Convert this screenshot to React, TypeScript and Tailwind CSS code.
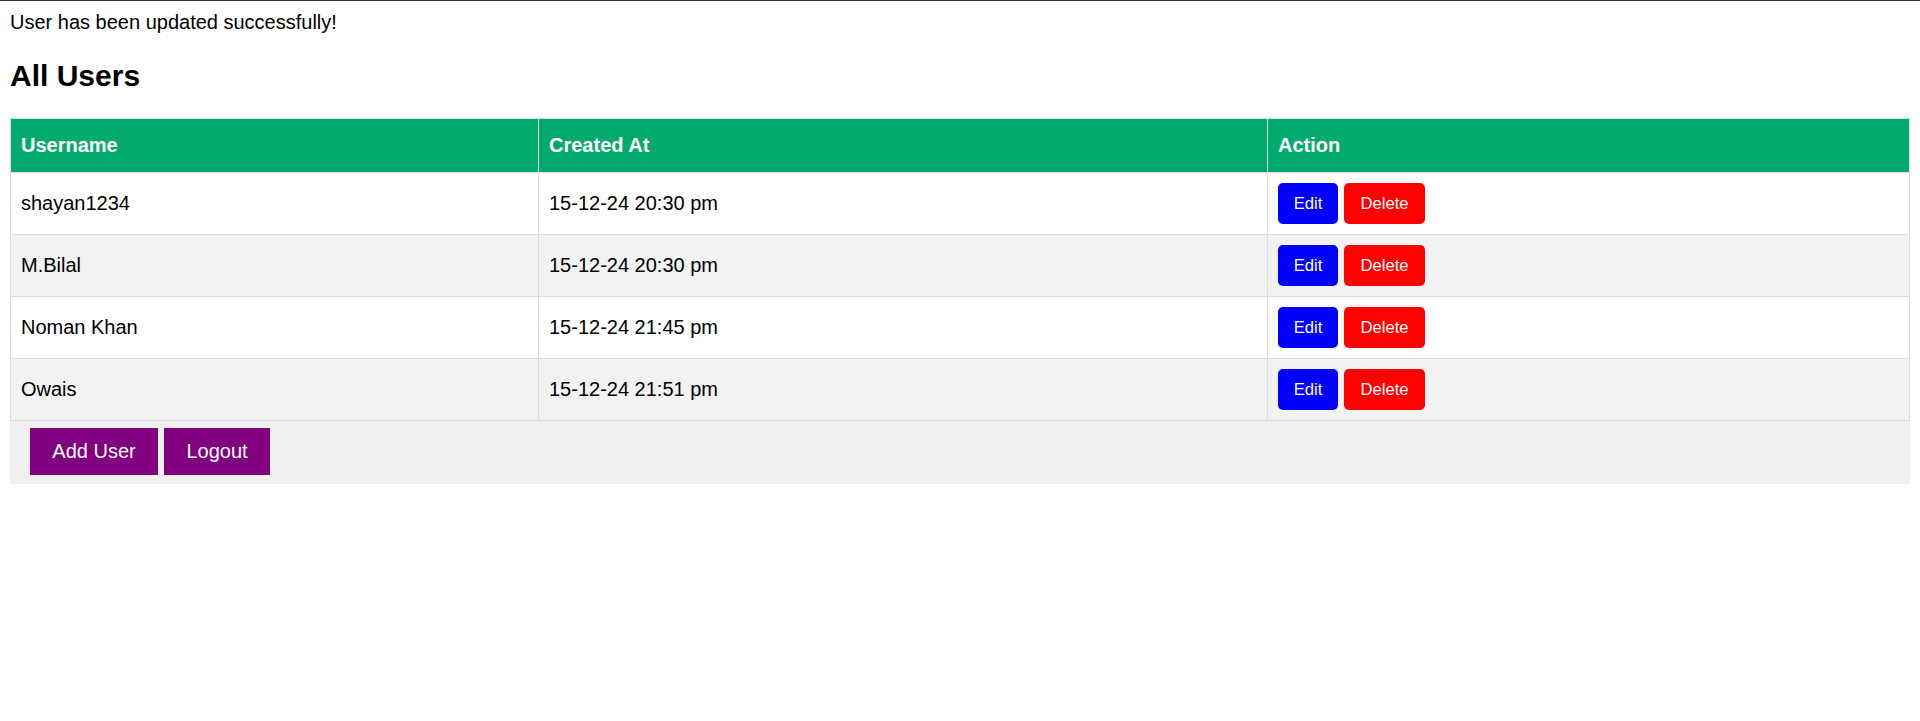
const users = [
  { name: "shayan1234", createdAt: "15-12-24 20:30 pm" },
  { name: "M.Bilal", createdAt: "15-12-24 20:30 pm" },
  { name: "Noman Khan", createdAt: "15-12-24 21:45 pm" },
  { name: "Owais", createdAt: "15-12-24 21:51 pm" },
];

export default function App() {
  return (
    <div className="min-h-[721px] border-t border-[#2b3b2b] bg-white font-['Liberation_Sans',Arial,sans-serif] text-black">
      <div className="px-[10px] pt-[10px]">
        <div className="text-[20px] leading-[23px]">
          User has been updated successfully!
        </div>
        <h2 className="my-[25px] text-[30px] font-bold leading-[34px]">
          All Users
        </h2>

        <table className="w-[1900px] table-fixed border-collapse text-left text-[20px] leading-[23px]">
          <colgroup>
            <col className="w-[528px]" />
            <col className="w-[729px]" />
            <col />
          </colgroup>
          <thead>
            <tr className="bg-[#04aa6d] text-white">
              <th className="border border-[#dddddd] px-[10px] py-[15px] font-bold">
                Username
              </th>
              <th className="border border-[#dddddd] px-[10px] py-[15px] font-bold">
                Created At
              </th>
              <th className="border border-[#dddddd] px-[10px] py-[15px] font-bold">
                Action
              </th>
            </tr>
          </thead>
          <tbody>
            {users.map((user, i) => (
              <tr
                key={user.name}
                className={i % 2 === 1 ? "bg-[#f2f2f2]" : "bg-white"}
              >
                <td className="border border-[#dddddd] p-[10px] align-middle">
                  {user.name}
                </td>
                <td className="border border-[#dddddd] p-[10px] align-middle">
                  {user.createdAt}
                </td>
                <td className="border border-[#dddddd] p-[10px] align-middle">
                  <div className="flex gap-[6px]">
                    <button
                      type="button"
                      className="h-[41px] w-[60px] rounded-[5px] bg-[#0000ff] text-[16.67px] leading-[19px] text-white"
                    >
                      Edit
                    </button>
                    <button
                      type="button"
                      className="h-[41px] w-[81px] rounded-[5px] bg-[#ff0000] text-[16.67px] leading-[19px] text-white"
                    >
                      Delete
                    </button>
                  </div>
                </td>
              </tr>
            ))}
          </tbody>
        </table>

        <div className="flex w-[1900px] gap-[6px] bg-[#f0f0f0] pb-[9px] pl-[20px] pt-[7px]">
          <button
            type="button"
            className="h-[47px] w-[128px] bg-[#800080] text-[20px] leading-[23px] text-white"
          >
            Add User
          </button>
          <button
            type="button"
            className="h-[47px] w-[106px] bg-[#800080] text-[20px] leading-[23px] text-white"
          >
            Logout
          </button>
        </div>
      </div>
    </div>
  );
}
